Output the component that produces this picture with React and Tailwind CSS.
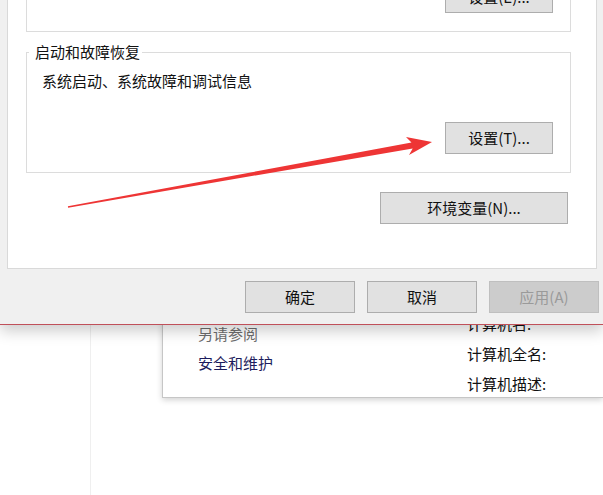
import React from 'react';

const font = { fontFamily: '"Noto Sans CJK SC", "Noto Sans", sans-serif' };

const Btn = ({ children, className = '', disabled = false }) => (
  <div
    className={`flex items-center justify-center h-[32px] border text-[15px] ${
      disabled
        ? 'bg-[#cccccc] border-[#bfbfbf] text-[#9a9a9a]'
        : 'bg-[#e1e1e1] border-[#adadad] text-[#111]'
    } ${className}`}
  >
    {children}
  </div>
);

const App = () => {
  return (
    <div className="relative w-[603px] h-[495px] overflow-hidden bg-white" style={font}>
      {/* Background: system page behind the dialog */}
      <div className="flex h-full">
        <div className="w-[91px] h-full border-r border-[#efefef]" />
        <div className="flex-1 pl-[71px]">
          <div className="h-[398px] bg-white border-l border-b border-[#c6c6c6] shadow-[0_2px_6px_rgba(0,0,0,0.18)] flex pl-[35px] text-[15px]">
            <div className="w-[269px] pt-[319px]">
              <div className="h-[29px] leading-[29px] text-[#6d6d6d]">另请参阅</div>
              <div className="h-[29px] leading-[29px] text-[#1c1c5c]">安全和维护</div>
            </div>
            <div className="pt-[309px] text-[#111]">
              <div className="h-[30px] leading-[30px]">计算机名:</div>
              <div className="h-[30px] leading-[30px]">计算机全名:</div>
              <div className="h-[30px] leading-[30px]">计算机描述:</div>
            </div>
          </div>
        </div>
      </div>

      {/* System properties dialog window */}
      <div className="absolute left-0 top-0 w-[603px] bg-[#f0f0f0] border-b border-[#c0505a] shadow-[0_6px_14px_rgba(0,0,0,0.2)]">
        <div className="pl-[7px] pr-[6px]">
          <div className="h-[269px] bg-white border-x border-b border-[#d9d9d9] pl-[18px] pr-[25px]">
            {/* Performance group (cut off at the top) */}
            <div className="h-[32px] border-x border-b border-[#dcdcdc] flex justify-end items-end pr-[17px] pb-[18px]">
              <Btn className="w-[108px] shrink-0">设置(E)...</Btn>
            </div>

            {/* Startup and recovery */}
            <fieldset className="mt-[10px] border border-[#dcdcdc]">
              <legend className="ml-[2px] pl-[6px] pr-[2px] text-[15px] leading-[20px] text-[#111]">
                启动和故障恢复
              </legend>
              <div className="pl-[15px] pr-[17px] pb-[18px]">
                <div className="mt-[9px] text-[15px] leading-[20px] text-[#111]">
                  系统启动、系统故障和调试信息
                </div>
                <div className="flex justify-end mt-[31px]">
                  <Btn className="w-[108px]">设置(T)...</Btn>
                </div>
              </div>
            </fieldset>

            <div className="flex justify-end mt-[19px] pr-[3px]">
              <Btn className="w-[188px]">环境变量(N)...</Btn>
            </div>
          </div>
        </div>

        <div className="flex justify-end gap-[12px] pr-[4px] pt-[12px] pb-[11px]">
          <Btn className="w-[110px]">确定</Btn>
          <Btn className="w-[110px]">取消</Btn>
          <Btn className="w-[110px]" disabled>应用(A)</Btn>
        </div>
      </div>

      {/* Red annotation arrow */}
      <svg className="absolute inset-0 pointer-events-none" width="603" height="495">
        <polygon
          points="67.9,206.3 411.5,142.6 406,137 432,142 409,155 412.7,148.4 68.1,207.7"
          fill="#ee3535"
        />
      </svg>
    </div>
  );
};

export default App;
